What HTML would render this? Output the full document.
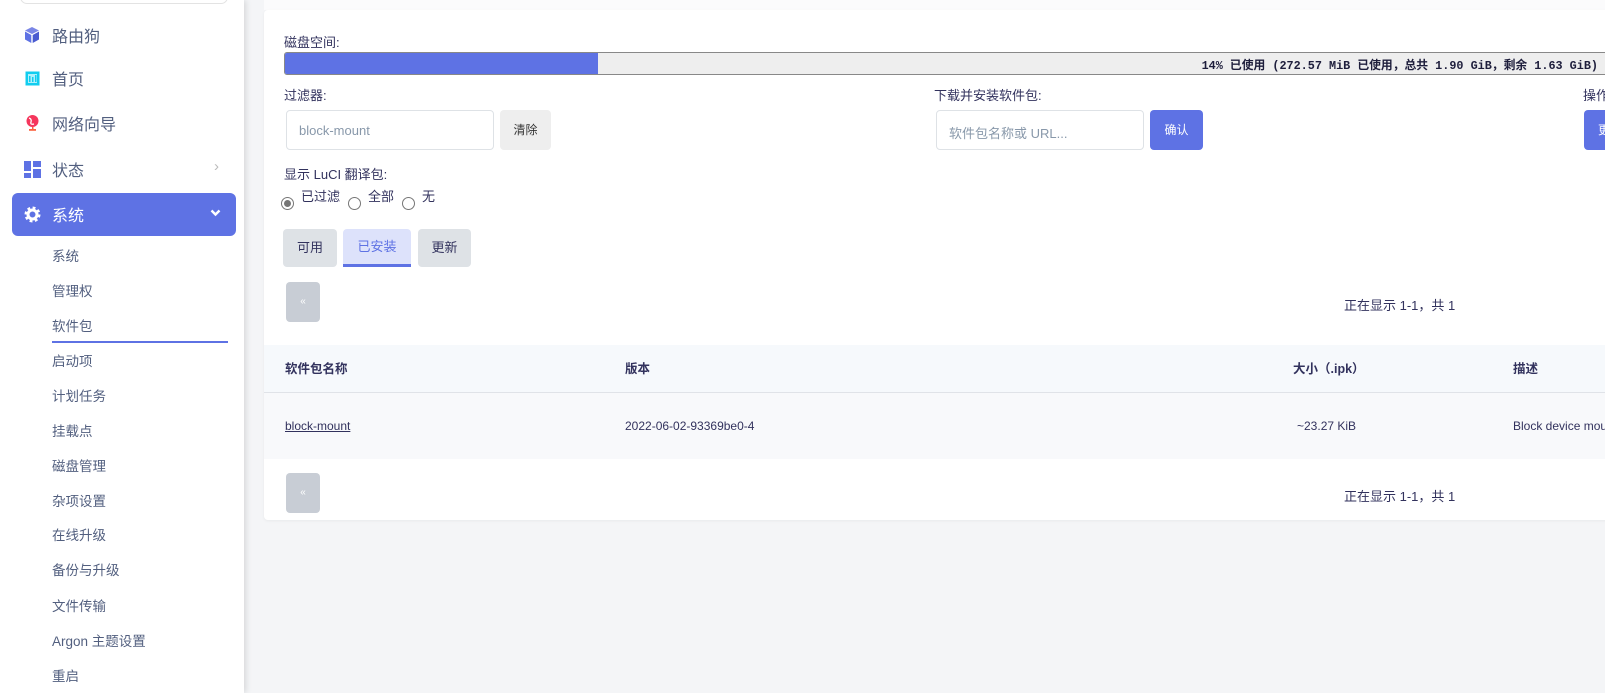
<!DOCTYPE html>
<html><head><meta charset="utf-8"><style>
*{box-sizing:border-box;margin:0;padding:0}
body{width:1605px;height:693px;overflow:hidden;background:#f4f5f7;font-family:"Liberation Sans","Noto Sans CJK SC",sans-serif;color:#32325d;position:relative;font-size:13px}
.sb{position:absolute;left:0;top:0;width:244px;height:693px;background:#fff;box-shadow:2px 0 6px rgba(0,0,0,.12)}
.abs{position:absolute}
.mi{position:absolute;left:52px;font-size:16px;color:#525f7f}
.si{position:absolute;left:52px;font-size:13.5px;color:#525f7f}
.card{position:absolute;left:264px;top:10px;width:1360px;height:510px;background:#fff;border-radius:4px;box-shadow:0 1px 3px rgba(0,0,0,.05)}
.lbl{position:absolute;font-size:13px;color:#32325d;white-space:nowrap}
.inp{position:absolute;height:40px;border:1px solid #dee2e6;border-radius:4px;background:#fff;font-size:13px;color:#8898aa;padding:12px 12px}
.btn{position:absolute;height:40px;border-radius:4px;font-size:12px;text-align:center;line-height:40px}
.radio{position:absolute;width:13px;height:13px;border:1px solid #767676;border-radius:50%;background:#fff}
</style></head><body>
<div class="sb">
 <div class="abs" style="left:20px;top:-10px;width:208px;height:14px;border:1px solid #e3e3e3;border-radius:8px"></div>
 <svg class="abs" style="left:24px;top:26px" width="16" height="18" viewBox="0 0 16 18"><path d="M8 1L15 4.5 8 8 1 4.5Z" fill="#7a86e6"/><path d="M1 5.5L7.3 9v8L1 13.5Z" fill="#5e72e4"/><path d="M15 5.5L8.7 9v8L15 13.5Z" fill="#4a5bd0"/></svg>
 <div class="mi" style="top:23px">路由狗</div>
 <svg class="abs" style="left:25px;top:71px" width="15" height="15"><rect x="0.5" y="0.5" width="14" height="14" fill="#11cdef" /><rect x="3" y="3" width="9" height="9" fill="#aef0fb"/><rect x="4" y="5" width="1.5" height="6" fill="#11cdef"/><rect x="7" y="6" width="1.5" height="5" fill="#11cdef"/><rect x="10" y="4" width="1.5" height="7" fill="#11cdef"/></svg>
 <div class="mi" style="top:66px">首页</div>
 <svg class="abs" style="left:25px;top:114px" width="15" height="18"><circle cx="7.5" cy="7" r="6" fill="#f5365c"/><path d="M4 4q3 1 2 4t3 2" stroke="#fff" stroke-width="1.3" fill="none"/><rect x="4" y="15" width="7" height="1.8" fill="#fb6340"/><rect x="7" y="13" width="1.5" height="3" fill="#fb6340"/></svg>
 <div class="mi" style="top:111px">网络向导</div>
 <svg class="abs" style="left:24px;top:161px" width="17" height="17"><rect x="0" y="0" width="7" height="10" fill="#5e72e4"/><rect x="9" y="0" width="8" height="6" fill="#5e72e4"/><rect x="0" y="12" width="7" height="5" fill="#5e72e4"/><rect x="9" y="8" width="8" height="9" fill="#5e72e4"/></svg>
 <div class="mi" style="top:157px">状态</div>
 <div class="abs" style="left:214px;top:158px;color:#bbb;font-size:15px">›</div>
 <div class="abs" style="left:12px;top:193px;width:224px;height:43px;background:#5e72e4;border-radius:6px"></div>
 <svg class="abs" style="left:24px;top:206px" width="17" height="17" viewBox="0 0 17 17"><circle cx="8.5" cy="8.5" r="6" fill="none" stroke="#fff" stroke-width="4" stroke-dasharray="2.5 2.2"/><circle cx="8.5" cy="8.5" r="4.5" fill="none" stroke="#fff" stroke-width="3"/></svg>
 <div class="mi" style="top:202px;color:#fff">系统</div>
 <svg class="abs" style="left:210px;top:209px" width="11" height="8"><path d="M1.5 1.5L5.5 5.5 9.5 1.5" stroke="#fff" stroke-width="2.4" fill="none"/></svg>
 <div class="si" style="top:245px">系统</div>
 <div class="si" style="top:280px">管理权</div>
 <div class="si" style="top:315px">软件包</div>
 <div class="abs" style="left:52px;top:341px;width:176px;height:2px;background:#5e72e4"></div>
 <div class="si" style="top:350px">启动项</div>
 <div class="si" style="top:385px">计划任务</div>
 <div class="si" style="top:420px">挂载点</div>
 <div class="si" style="top:455px">磁盘管理</div>
 <div class="si" style="top:490px">杂项设置</div>
 <div class="si" style="top:524px">在线升级</div>
 <div class="si" style="top:559px">备份与升级</div>
 <div class="si" style="top:595px">文件传输</div>
 <div class="si" style="top:630px">Argon 主题设置</div>
 <div class="si" style="top:665px">重启</div>
</div>
<div class="abs" style="left:264px;top:0;width:1341px;height:10px;background:#fbfbfc"></div>
<div class="card"></div>
<div class="lbl" style="left:284px;top:32px">磁盘空间:</div>
<div class="abs" style="left:284px;top:52px;width:1330px;height:23px;background:#eee;border:1px solid #888;border-radius:3px 0 0 3px;overflow:hidden">
 <div style="width:313px;height:100%;background:#5e72e4"></div>
</div>
<div class="abs" style="right:7px;top:56px;font-family:'Liberation Mono','Noto Sans CJK SC',monospace;font-weight:bold;font-size:11.8px;color:#1e1e3c;white-space:nowrap">14% 已使用 (272.57 MiB 已使用，总共 1.90 GiB，剩余 1.63 GiB)</div>
<div class="lbl" style="left:284px;top:85px">过滤器:</div>
<div class="inp" style="left:286px;top:110px;width:208px">block-mount</div>
<div class="btn" style="left:500px;top:110px;width:51px;background:#eee;color:#333">清除</div>
<div class="lbl" style="left:934px;top:85px">下载并安装软件包:</div>
<div class="inp" style="left:936px;top:110px;width:208px">软件包名称或 URL...</div>
<div class="btn" style="left:1150px;top:110px;width:53px;background:#5e72e4;color:#fff">确认</div>
<div class="lbl" style="left:1583px;top:85px">操作</div>
<div class="btn" style="left:1584px;top:110px;width:40px;background:#5e72e4;color:#fff;text-align:left;padding-left:14px">更</div>
<div class="lbl" style="left:284px;top:164px">显示 LuCI 翻译包:</div>
<div class="radio" style="left:281px;top:197px"><div style="margin:2px;width:7px;height:7px;border-radius:50%;background:#767676"></div></div>
<div class="lbl" style="left:301px;top:186px">已过滤</div>
<div class="radio" style="left:348px;top:197px"></div>
<div class="lbl" style="left:368px;top:186px">全部</div>
<div class="radio" style="left:402px;top:197px"></div>
<div class="lbl" style="left:422px;top:186px">无</div>
<div class="btn" style="left:283px;top:229px;width:54px;height:38px;line-height:38px;background:#dee2e6;color:#32325d;font-size:13px">可用</div>
<div class="btn" style="left:343px;top:229px;width:68px;height:38px;line-height:36px;background:#dde2fb;color:#5e72e4;font-size:13px;border-bottom:3px solid #5e72e4;border-radius:4px 4px 0 0">已安装</div>
<div class="btn" style="left:418px;top:229px;width:53px;height:38px;line-height:38px;background:#dee2e6;color:#32325d;font-size:13px">更新</div>
<div class="btn" style="left:286px;top:282px;width:34px;background:#c8cdd5;color:#fff;font-size:10px">«</div>
<div class="lbl" style="left:1344px;top:295px">正在显示 1-1，共 1</div>
<div class="abs" style="left:264px;top:345px;width:1341px;height:48px;background:#f6f9fc;border-bottom:1px solid #e0e3e8"></div>
<div class="lbl" style="left:285px;top:358px;font-weight:bold;font-size:12.5px">软件包名称</div>
<div class="lbl" style="left:625px;top:358px;font-weight:bold;font-size:12.5px">版本</div>
<div class="lbl" style="left:1293px;top:358px;font-weight:bold;font-size:12.5px">大小（.ipk）</div>
<div class="lbl" style="left:1513px;top:358px;font-weight:bold;font-size:12.5px">描述</div>
<div class="abs" style="left:264px;top:393px;width:1341px;height:66px;background:#f8f9fb"></div>
<div class="lbl" style="left:285px;top:419px;font-size:12px;text-decoration:underline">block-mount</div>
<div class="lbl" style="left:625px;top:419px;font-size:12px">2022-06-02-93369be0-4</div>
<div class="lbl" style="left:1297px;top:419px;font-size:12px">~23.27 KiB</div>
<div class="lbl" style="left:1513px;top:419px;font-size:12px">Block device mount</div>
<div class="btn" style="left:286px;top:473px;width:34px;background:#c8cdd5;color:#fff;font-size:10px">«</div>
<div class="lbl" style="left:1344px;top:486px">正在显示 1-1，共 1</div>
</body></html>
